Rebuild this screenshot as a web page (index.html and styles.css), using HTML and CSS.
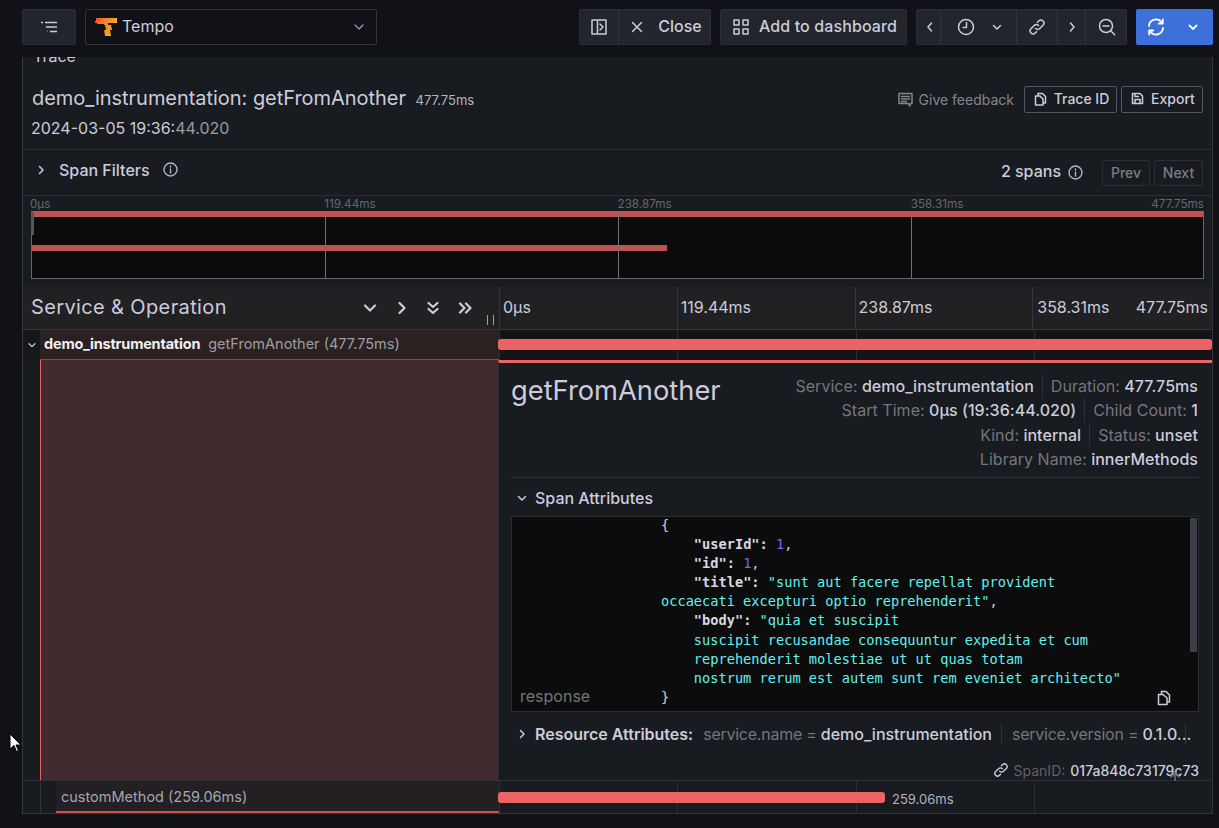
FILE: index.html
```html
<!DOCTYPE html>
<html lang="en">
<head>
<meta charset="utf-8">
<title>Tempo trace</title>
<link rel="stylesheet" href="styles.css">
</head>
<body>
<header class="toolbar">
  <button class="btn b-menu"><svg width="18" height="14" viewBox="0 0 18 14" class="ic ic-thin"><path d="M1 2.500h2M5 2.500h12M6 7h11M7 11.500h.5M10 11.500h7" /></svg></button>
  <div class="select">
    <svg class="logo" width="24" height="20" viewBox="0 0 24 20"><defs><linearGradient id="g" x1="0" x2="1" y1="0" y2="0.3"><stop offset="0" stop-color="#f0512a"/><stop offset="1" stop-color="#fbb316"/></linearGradient></defs><path d="M2 1h21v5H14v2h3l1 5h-2l1 6h-6l-1-6h2l-1-5h-1V7H3V6H1V4h1z" fill="url(#g)"/></svg>
    <span class="sel-text">Tempo</span>
    <svg class="sel-chev ic" width="12" height="12" viewBox="0 0 12 12"><path d="M2 4l4 4 4-4"/></svg>
  </div>
  <div class="group g-close">
    <button class="seg s39"><svg width="18" height="18" viewBox="0 0 18 18" class="ic"><path d="M2 2h14v14H2zM7.500 2v14M10 6l3 3-3 3"/></svg></button>
    <button class="seg s93"><svg width="14" height="14" viewBox="0 0 14 14" class="ic"><path d="M2.500 2.500l9 9M11.500 2.500l-9 9"/></svg><span>Close</span></button>
  </div>
  <button class="btn b-add"><svg width="18" height="18" viewBox="0 0 18 18" class="ic"><path d="M2 2h5v5H2zM11 2h5v5h-5zM2 11h5v5H2zM11 11h5v5h-5z"/></svg><span>Add to dashboard</span></button>
  <div class="group g-time">
    <button class="seg s24"><svg width="12" height="12" viewBox="0 0 12 12" class="ic"><path d="M7.500 2l-3.500 4 3.500 4"/></svg></button>
    <button class="seg s76"><svg width="18" height="18" viewBox="0 0 18 18" class="ic"><circle cx="9" cy="9" r="7.500"/><path d="M9.500 4.500v5H6"/></svg><svg class="chev-small ic" width="12" height="12" viewBox="0 0 12 12"><path d="M2.500 4.500l3.500 3.500 3.500-3.500"/></svg></button>
    <button class="seg s41"><svg width="18" height="18" viewBox="0 0 18 18" class="ic"><path d="M7.500 10.500a3 3 0 0 0 4.300 0l3.200-3.200a3 3 0 0 0-4.300-4.300L9.500 4.200M10.500 7.500a3 3 0 0 0-4.300 0L3 10.700A3 3 0 0 0 7.300 15l1.200-1.200"/></svg></button>
    <button class="seg s28"><svg width="12" height="12" viewBox="0 0 12 12" class="ic"><path d="M4.500 2l3.500 4-3.500 4"/></svg></button>
    <button class="seg s41"><svg width="18" height="18" viewBox="0 0 18 18" class="ic"><circle cx="8" cy="8" r="6.500"/><path d="M5 8h6M12.700 12.700l4 4"/></svg></button>
  </div>
  <button class="btn-primary">
    <svg width="18" height="18" viewBox="0 0 18 18" class="ic-white"><path d="M2 8a7 7 0 0 1 12-4.500l1.500 1.500M16 10a7 7 0 0 1-12 4.500L2.500 13M15.800 1.500v4h-4M2.200 16.500v-4h4"/></svg>
    <svg class="ic-white" width="12" height="12" viewBox="0 0 12 12"><path d="M2.500 4.500l3.500 3.500 3.500-3.500"/></svg>
  </button>
</header>

<main class="panel">
  <div class="clipped"><span>Trace</span></div>
  <section class="trace-head">
    <div class="th-left">
      <div class="th-title">demo_instrumentation: getFromAnother <small>477.75ms</small></div>
      <div class="th-date">2024-03-05 19:36:<span class="dim">44.020</span></div>
    </div>
    <div class="th-actions">
      <span class="feedback"><svg width="15" height="15" viewBox="0 0 15 15" class="ic-dim"><path d="M1 1.500h13v10h-2v2.500l-2-2.500H1zM3.500 4.500h8M3.500 7h8M3.500 9.500h5"/></svg>Give feedback</span>
      <button class="outline o-id"><svg width="13" height="14" viewBox="0 0 13 14" class="ic"><path d="M4 4V1.500h4.500L11.500 4.500V11H9M1.500 4h4.500l3 3v6H1.500z"/></svg>Trace ID</button>
      <button class="outline o-ex"><svg width="13" height="13" viewBox="0 0 13 13" class="ic"><path d="M1.500 1.500h7.500l2.500 2.500v7.500h-10zM4 11.500V7.500h5v4M4 1.500v3h3.500"/></svg>Export</button>
    </div>
  </section>
  <section class="filters">
    <svg class="ic f-up" width="12" height="12" viewBox="0 0 12 12"><path d="M4.500 2.500l3.500 3.500-3.500 3.500"/></svg>
    <span class="f-label f-up">Span Filters</span>
    <svg class="ic-info f-up" width="15" height="15" viewBox="0 0 15 15"><circle cx="7.500" cy="7.500" r="6.500"/><path d="M7.500 7v4M7.500 4v1"/></svg>
    <span class="f-spacer"></span>
    <span class="f-count">2 spans</span>
    <svg class="ic-info" width="15" height="15" viewBox="0 0 15 15"><circle cx="7.500" cy="7.500" r="6.500"/><path d="M7.500 7v4M7.500 4v1"/></svg>
    <button class="dis d-prev">Prev</button>
    <button class="dis d-next">Next</button>
  </section>
  <section class="mini">
    <div class="mini-labels"><span>0µs</span><span>119.44ms</span><span>238.87ms</span><span>358.31ms</span><span>477.75ms</span></div>
    <div class="mini-box">
      <i class="tick t1"></i><i class="tick t2"></i><i class="tick t3"></i>
      <div class="mbar m1"></div>
      <div class="mbar m2"></div>
      <i class="handle"></i>
    </div>
  </section>
  <section class="thead">
    <div class="th-name">
      <span class="th-svc">Service &amp; Operation</span>
      <span class="th-icons">
        <svg class="ic-b" width="14" height="14" viewBox="0 0 14 14"><path d="M2 4.500l5 5 5-5"/></svg>
        <svg class="ic-b" width="14" height="14" viewBox="0 0 14 14"><path d="M4.500 2l5 5-5 5"/></svg>
        <svg class="ic-b" width="14" height="14" viewBox="0 0 14 14"><path d="M2.500 2l4.500 4 4.500-4M2.500 8l4.500 4 4.500-4"/></svg>
        <svg class="ic-b" width="14" height="14" viewBox="0 0 14 14"><path d="M2 2.500l4.500 4.500-4.500 4.500M8 2.500l4.500 4.500-4.500 4.500"/></svg>
      </span>
      <i class="grip"></i>
    </div>
    <div class="th-time">
      <div class="tc">0µs</div><div class="tc">119.44ms</div><div class="tc">238.87ms</div>
      <div class="tc tc-last"><span>358.31ms</span><span>477.75ms</span></div>
    </div>
  </section>
  <section class="row r-main">
    <div class="r-tog"><svg class="ic" width="10" height="10" viewBox="0 0 12 12"><path d="M2.500 4.500l3.500 3.500 3.500-3.500"/></svg></div>
    <div class="r-name"><b>demo_instrumentation</b><span>getFromAnother (477.75ms)</span></div>
    <div class="r-time"><div class="ticks"><i></i><i></i><i></i><i></i></div><div class="bar b-full"></div></div>
  </section>
  <section class="detail-row">
    <div class="d-gutter"></div>
    <div class="d-fill"></div>
    <div class="detail">
      <div class="d-head">
        <h2>getFromAnother</h2>
        <div class="d-meta">
          <div class="ml"><span><em>Service:</em> demo_instrumentation</span><span class="sep"><em>Duration:</em> 477.75ms</span></div>
          <div class="ml"><span><em>Start Time:</em> 0µs (19:36:44.020)</span><span class="sep"><em>Child Count:</em> 1</span></div>
          <div class="ml"><span><em>Kind:</em> internal</span><span class="sep"><em>Status:</em> unset</span></div>
          <div class="ml"><span><em>Library Name:</em> innerMethods</span></div>
        </div>
      </div>
      <div class="d-attr-title"><svg class="ic" width="12" height="12" viewBox="0 0 12 12"><path d="M2.500 4.500l3.500 3.500 3.500-3.500"/></svg><span>Span Attributes</span></div>
      <div class="code">
        <div class="c-key">response</div>
<pre class="c-val">{
    <b>"userId":</b> <u>1</u>,
    <b>"id":</b> <u>1</u>,
    <b>"title":</b> <s>"sunt aut facere repellat provident
occaecati excepturi optio reprehenderit"</s>,
    <b>"body":</b> <s>"quia et suscipit
    suscipit recusandae consequuntur expedita et cum
    reprehenderit molestiae ut ut quas totam
    nostrum rerum est autem sunt rem eveniet architecto"</s>
}</pre>
        <i class="scroll"></i>
        <svg class="c-copy ic" width="14" height="16" viewBox="0 0 14 16"><path d="M4.500 4V1.500h4.500l3.500 3.500V12H10M1.500 4.500h4.500l4 3.500v6.500H1.500z"/></svg>
      </div>
      <div class="res">
        <svg class="ic" width="12" height="12" viewBox="0 0 12 12"><path d="M4.500 2.500l3.500 3.500-3.500 3.500"/></svg>
        <strong>Resource Attributes:</strong>
        <span class="kv"><em>service.name =</em> demo_instrumentation</span>
        <span class="kv kv2"><em>service.version =</em> 0.1.0...</span>
      </div>
      <div class="spanid">
        <svg class="ic" width="16" height="16" viewBox="0 0 18 18"><path d="M7.500 10.500a3 3 0 0 0 4.300 0l3.200-3.200a3 3 0 0 0-4.300-4.300L9.500 4.200M10.500 7.500a3 3 0 0 0-4.300 0L3 10.700A3 3 0 0 0 7.300 15l1.200-1.200"/></svg>
        <em>SpanID:</em><span>017a848c73179c73</span>
        <svg class="uparrow" width="14" height="14" viewBox="0 0 14 14"><path d="M7 13V2M2.500 6.500L7 2l4.500 4.500"/></svg>
      </div>
    </div>
  </section>
  <section class="row r-child">
    <div class="r-tog2"><i></i></div>
    <div class="r-name2">customMethod (259.06ms)</div>
    <div class="r-time r-time2"><div class="ticks"><i></i><i></i><i></i><i></i></div><div class="bar b-part"></div><span class="bar-label">259.06ms</span></div>
  </section>
</main>
<svg class="cursor" width="14" height="20" viewBox="0 0 14 20"><path d="M1 1v15l4-3.500 2.500 6 2-1-2.500-5.500h5z" fill="#fff" stroke="#000" stroke-width="1"/></svg>
</body>
</html>
```
FILE: styles.css
```css
* { box-sizing: border-box; }
html, body { margin: 0; height: 828px; overflow: hidden; }
body { background: #111217; color: #ccccdc; font-family: Inter, "Noto Sans", sans-serif; font-size: 14px; position: relative; }
button { font: inherit; color: inherit; background: none; border: 0; padding: 0; margin: 0; display: flex; align-items: center; justify-content: center; }
em { font-style: normal; }
svg { flex: none; display: block; }
.ic, .ic-white, .ic-dim, .ic-info, .ic-b { fill: none; stroke-linecap: round; stroke-linejoin: round; stroke-width: 1.5; }
.ic { stroke: #ccccdc; }
.ic-thin { stroke-width: 1.3; stroke-linecap: butt; }
.ic-white { stroke: #fff; stroke-width: 1.8; }
.ic-dim { stroke: #85868b; }
.ic-info { stroke: #b4b4c0; stroke-width: 1.4; }
.ic-b { stroke: #ccccdc; stroke-width: 2.2; }

.toolbar { height: 57px; padding: 9px 6px 0 22px; display: flex; align-items: flex-start; }
.btn, .group, .select { height: 36px; border: 1px solid #2d2e33; border-radius: 2px; background: #22252b; }
.btn { font-weight: 500; font-size: 16px; letter-spacing: 0.12px; }
.btn span, .seg span, .sel-text { margin-top: -2px; }
.b-menu { width: 54px; margin-right: 9px; }
.select { width: 292px; background: #111217; border-color: #33353a; display: flex; align-items: center; padding-left: 8px; font-size: 16px; margin-right: 202px; }
.logo { margin-right: 4px; }
.sel-chev { margin-left: auto; margin-right: 11px; stroke: #9a9aa5; stroke-width: 1.3; }
.group { display: flex; }
.g-close { width: 132px; margin-right: 9px; }
.b-add { width: 187px; gap: 9px; margin-right: 9px; padding-left: 2px; }
.g-time { width: 211px; margin-right: 9px; }
.seg { height: 34px; border-right: 1px solid #33353a; flex: none; }
.seg:last-child { border-right: 0; }
.s24 { width: 24px; padding-left: 2px; } .s39 { width: 39px; } .s93 { width: 92px; gap: 14px; font-size: 16px; font-weight: 500; padding-left: 2px; }
.s76 { width: 76px; justify-content: flex-start; padding-left: 16px; gap: 16px; }
.s41 { width: 41px; } .s28 { width: 28px; }
.chev-small { stroke: #ccccdc; }
.btn-primary { width: 77px; height: 36px; border-radius: 2px; background: #3d71d9; justify-content: flex-start; padding-left: 11px; gap: 22px; }

.panel { width: 1191px; height: 757px; margin-left: 22px; background: #181b1f; border: 1px solid #34363b; border-width: 0 1px 1px; display: flex; flex-direction: column; overflow: hidden; }
.clipped { height: 6px; overflow: hidden; display: flex; align-items: flex-end; padding-left: 10px; font-size: 16px; line-height: 14px; flex: none; }
.clipped span { display: block; }
.trace-head { height: 87px; flex: none; display: flex; justify-content: space-between; border-bottom: 1px solid #2a2c31; padding: 21px 9px 0 8px; }
.th-title { font-size: 20px; line-height: 28px; padding-left: 1px; letter-spacing: -0.04px; }
.th-title small { font-size: 13px; margin-left: 4px; color: #b5b5c2; letter-spacing: 0; }
.th-date { font-size: 16px; line-height: 24px; margin-top: 2px; }
.dim { color: #9b9ca3; }
.th-actions { display: flex; gap: 4px; align-items: center; height: 28px; font-size: 14px; font-weight: 500; padding-top: 2px; }
.feedback { display: flex; align-items: center; gap: 6px; color: #85868b; font-weight: 400; margin-right: 6px; }
.outline { height: 27px; border: 1px solid #55575c; border-radius: 2px; gap: 7px; padding-bottom: 1px; padding-left: 2px; }
.o-id { width: 93px; } .o-ex { width: 82px; }

.filters { height: 46px; flex: none; display: flex; align-items: center; padding: 0 9px 0 12px; border-bottom: 1px solid #2a2c31; }
.f-up { margin-bottom: 6px; }
.f-label { font-size: 16px; font-weight: 500; margin: 0 13px 6px 12px; }
.f-spacer { flex: 1; }
.f-count { font-size: 16px; font-weight: 500; margin-right: 7px; margin-bottom: 4px; }
.dis { height: 26px; border: 1px solid #2d2e33; border-radius: 2px; color: #7c7d83; font-weight: 500; font-size: 14px; }
.d-prev { width: 48px; margin-left: 19px; margin-right: 4px; } .d-next { width: 49px; }

.mini { height: 91px; flex: none; padding: 0 8px 8px; display: flex; flex-direction: column; }
.mini-labels { height: 15px; display: grid; grid-template-columns: repeat(4, 293.250px) 1fr; font-size: 11.700px; line-height: 17px; color: #66686e; }
.mini-labels span:first-child { margin-left: -1px; }
.mini-labels span:last-child { text-align: right; margin-left: -60px; }
.mini-box { height: 68px; position: relative; background: #0b0b0c; border: 1px solid #65676b; border-top: 0; display: flex; flex-direction: column; }
.mbar { height: 6px; background: #bd5352; position: relative; }
.m2 { margin-top: 28px; width: 635px; }
.tick { position: absolute; top: 0; bottom: 0; width: 1px; background: #6d6f73; z-index: 1; }
.t1 { left: 293px; } .t2 { left: 586px; } .t3 { left: 879px; }
.handle { position: absolute; left: -1px; top: 1px; width: 3px; height: 23px; background: #55575b; z-index: 2; }

.thead { height: 43px; flex: none; display: flex; background: #212123; border-bottom: 1px solid #34363b; }
.th-name { width: 476px; flex: none; display: flex; align-items: center; padding-left: 8px; position: relative; }
.th-svc { font-size: 20px; letter-spacing: 0.37px; margin-bottom: 2px; }
.th-icons { position: absolute; left: 340px; top: 14px; display: flex; gap: 17.500px; }
.grip { position: absolute; right: 5px; top: 28px; width: 7px; height: 10px; border: solid #9fa0a8; border-width: 0 1px; }
.th-time { flex: 1; display: flex; border-left: 1px solid #34363b; }
.tc { flex: 1; border-left: 1px solid #34363b; padding: 0 3px; font-size: 16px; line-height: 41px; }
.tc:first-child { border-left: 0; }
.tc-last { display: flex; justify-content: space-between; flex: 1; padding: 0 4px; }

.row { flex: none; display: flex; }
.r-main { height: 30px; }
.r-tog { width: 17px; background: #161719; display: flex; align-items: center; justify-content: center; }
.r-name { width: 459px; background: #2b2120; display: flex; align-items: center; gap: 8px; padding: 0 0 2px 4px; border-bottom: 1px solid #8a4a4b; font-size: 14.500px; color: #9d9ea5; }
.r-name b { color: #f0f0f5; font-weight: 700; letter-spacing: -0.2px; }
.r-time { flex: 1; position: relative; background: #141416; }
.ticks { position: absolute; inset: 0; display: flex; }
.ticks i { flex: 1; border-left: 1px solid #2c2d31; }
.bar { position: absolute; left: -1px; height: 11px; background: #ec6363; border-radius: 3px; top: 9px; }
.b-full { right: 0; }
.b-part { width: 387px; top: 11px; }
.bar-label { position: absolute; left: 393px; top: 10px; font-size: 13px; color: #b4b4c0; }

.detail-row { height: 421px; flex: none; display: flex; border-bottom: 1px solid #2f3136; }
.d-gutter { width: 17px; flex: none; }
.d-fill { width: 458px; flex: none; background: #432a2e; border-left: 1px solid #ec6363; }
.detail { flex: 1; min-width: 0; border-top: 3px solid #ec6363; border-left: 1px solid #2a2c31; padding: 0 13px 0 12px; display: flex; flex-direction: column; }
.d-head { height: 115px; flex: none; display: flex; justify-content: space-between; border-bottom: 1px solid #2f3136; }
.d-head h2 { margin: 12px 0 0; font-size: 27.300px; line-height: 32px; font-weight: 400; }
.d-meta { padding: 10.750px 1px 0 0; font-size: 16px; font-weight: 500; letter-spacing: 0.04px; }
.ml { display: flex; justify-content: flex-end; line-height: 24.500px; }
.ml em { font-weight: 400; color: #75767c; }
.sep { margin-left: 8px; padding-left: 8px; border-left: 1px solid #2f3136; }
.d-attr-title { height: 38px; flex: none; display: flex; align-items: center; gap: 7px; padding: 2px 0 0 5px; font-size: 16px; font-weight: 500; }
.code { height: 196px; flex: none; background: #0c0c0d; border: 1px solid #2a2c30; position: relative; display: flex; }
.c-key { position: absolute; left: 8px; bottom: 5px; font-size: 16px; color: #74757a; }
.c-val { margin: -1px 0 0 149px; font-family: "DejaVu Sans Mono", monospace; font-size: 13.650px; line-height: 19.100px; color: #ccccdc; }
.c-val b { color: #d8d8e2; font-weight: 700; }
.c-val u { text-decoration: none; color: #6c6cf0; }
.c-val s { text-decoration: none; color: #5ff2ee; }
.scroll { position: absolute; right: 1px; top: 1px; width: 7px; height: 134px; background: #3c3e4a; }
.c-copy { position: absolute; right: 27px; bottom: 5px; }
.res { height: 46px; flex: none; display: flex; align-items: center; font-size: 16px; font-weight: 500; padding: 0 0 2px 5px; white-space: nowrap; }
.res strong { font-weight: 600; margin: 0 10px 0 7px; }
.kv { padding-right: 9px; }
.kv em { font-weight: 400; color: #75767c; letter-spacing: -0.25px; }
.kv2 { width: 185px; flex: none; border: solid #2f3136; border-width: 0 1px; padding: 0 0 0 10px; }
.spanid { position: relative; flex: none; height: 24px; display: flex; align-items: center; justify-content: flex-end; gap: 5px; font-size: 14px; font-weight: 500; }
.spanid em { font-weight: 400; color: #5f6065; }
.uparrow { position: absolute; right: 17px; top: 13px; fill: none; stroke: #70727a; stroke-width: 1.6; }

.r-child { height: 32px; }
.r-tog2 { width: 33px; display: flex; padding-left: 17px; }
.r-tog2 i { display: block; width: 1px; background: #2f3136; }
.r-name2 { width: 443px; background: #231f23; border-bottom: 2px solid #c9514f; font-size: 14.500px; color: #a5a6ad; line-height: 30px; padding: 1px 0 0 5px; }
.r-time2 { background: #181b1f; }
.cursor { position: absolute; left: 9px; top: 733px; }
```
